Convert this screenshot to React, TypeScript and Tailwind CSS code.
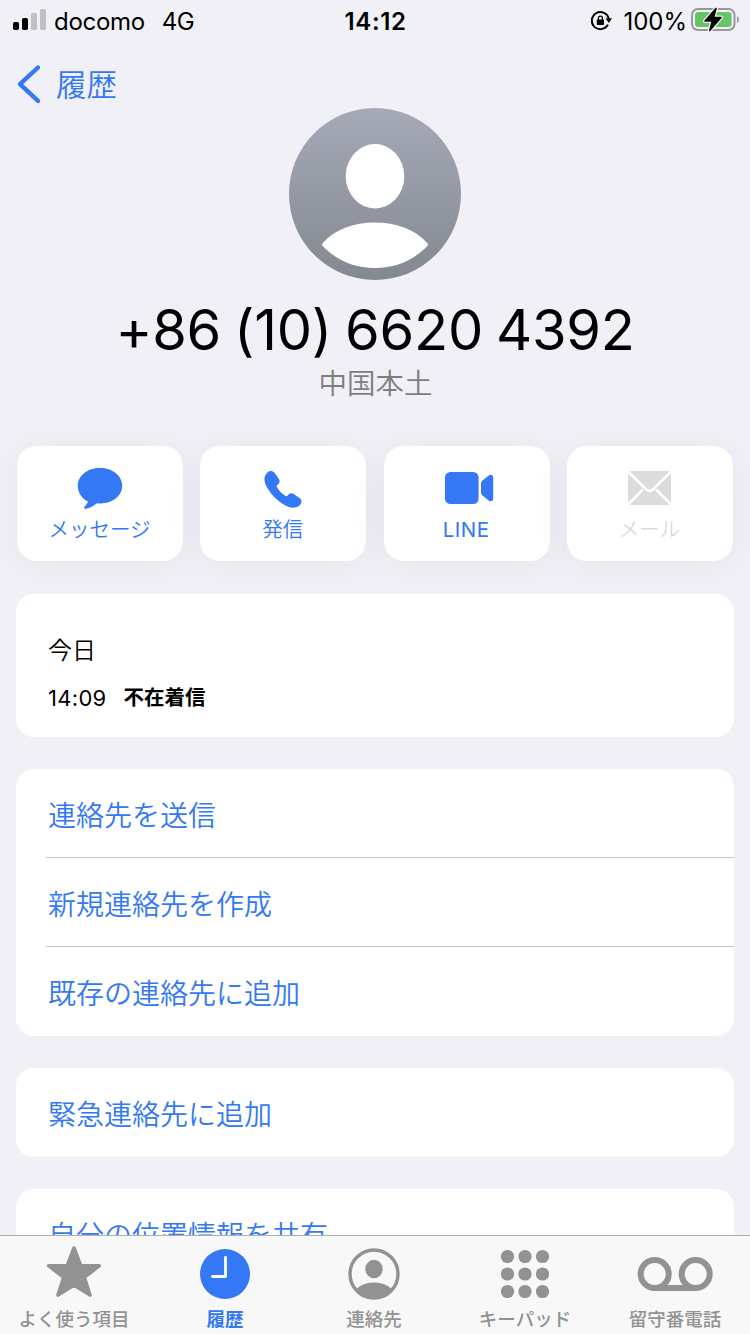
import type { ReactNode } from "react";

function SignalIcon() {
  return (
    <svg width="34" height="24" viewBox="13 8 34 24" className="mb-0.5 shrink-0">
      <rect x="13" y="22" width="6" height="8" rx="1.8" fill="#000" />
      <rect x="22" y="18" width="6" height="12" rx="1.8" fill="#000" />
      <rect x="31" y="13" width="6" height="17" rx="1.8" fill="#c0bfc5" />
      <rect x="40" y="9" width="6" height="21" rx="1.8" fill="#c0bfc5" />
    </svg>
  );
}

function RotationLockIcon() {
  return (
    <svg width="24" height="24" viewBox="590 8 24 24" className="mb-0.5 shrink-0">
      <path d="M608.600 25.300A8.600 8.600 0 1 1 609.600 18" fill="none" stroke="#000" strokeWidth="1.900" strokeLinecap="round" />
      <path d="M606.600 18.300h6.400l-3.200 4.800z" fill="#000" />
      <rect x="597.800" y="19.400" width="7.200" height="5.700" rx="0.800" fill="#000" />
      <path d="M599.400 20v-1.800a2 2 0 0 1 4 0V20" fill="none" stroke="#000" strokeWidth="1.300" />
    </svg>
  );
}

function BatteryIcon() {
  return (
    <svg width="50" height="26" viewBox="690 7 50 26" className="mb-0.5 shrink-0">
      <rect x="692" y="9" width="42.500" height="21" rx="6" fill="none" stroke="#98979d" strokeWidth="2" />
      <path d="M737 16.200c2.600 1 2.600 5.600 0 6.600z" fill="#98979d" />
      <rect x="695" y="12" width="36.500" height="15" rx="3.300" fill="#65c466" />
      <path d="M716 8.500L705 21.100h7.200l-2.500 9.500 11.300-13.200h-7.300z" fill="#000" stroke="#f1f0f6" strokeWidth="4" strokeLinejoin="round" />
      <path d="M716 8.500L705 21.100h7.200l-2.500 9.500 11.300-13.200h-7.300z" fill="#000" stroke="#000" strokeWidth="1.500" strokeLinejoin="round" />
    </svg>
  );
}

function Avatar() {
  return (
    <svg width="172" height="172" viewBox="0 0 172 172">
      <defs>
        <linearGradient id="avatar" x1="0" y1="0" x2="0" y2="1">
          <stop offset="0" stopColor="#a6aab8" />
          <stop offset="1" stopColor="#848890" />
        </linearGradient>
      </defs>
      <circle cx="86" cy="86" r="86" fill="url(#avatar)" />
      <ellipse cx="86" cy="68.200" rx="29.300" ry="32.200" fill="#fff" />
      <path d="M33.600 135.200C45 121.500 65 114.400 86 114.400s41 7.100 52.400 20.800q1.200 1.500 0 2.900C124 152.500 107 160 86 160s-38-7.500-52.400-21.900q-1.200-1.400 0-2.900z" fill="#fff" />
    </svg>
  );
}

function MessageIcon() {
  return (
    <svg width="50" height="50" viewBox="75 463 50 50">
      <path d="M100 468c12.700 0 22.200 7.800 22.200 17.800s-9.500 17.700-21.700 17.700c-1.200 0-2.300 0-3.400-.2-3.300 2.300-7.300 5-11.200 5.500-1.900.2-2.200-1.300-1.200-2.400 1.500-1.500 2.800-3 3.200-4.800-6.200-3.200-10.100-8.900-10.100-15.800 0-10 9.500-17.800 22.200-17.800z" fill="#3478f6" />
    </svg>
  );
}

function PhoneIcon() {
  return (
    <svg width="50" height="50" viewBox="258 463 50 50">
      <path d="M267 472.900c2.500-2.600 5.800-2.600 7.700.1l4.200 6.100c1.200 1.800.9 3.600-.6 5l-1 1c-.7.700-.7 1.300-.3 2.100 2 3.500 5.200 6.700 8.700 8.700.7.400 1.300.3 1.900-.3l1-1c1.600-1.600 3.400-1.800 5.200-.6l6 4.200c2.600 1.900 2.100 5.100-.4 7.300-4.600 3.600-10.300 2.500-15.800-.9-6.400-4-12-9.700-15.900-16.100-3.300-5.500-5-11.400-.7-15.600z" fill="#3478f6" />
    </svg>
  );
}

function VideoIcon() {
  return (
    <svg width="50" height="50" viewBox="442 463 50 50" className="overflow-visible">
      <rect x="445" y="472" width="33.600" height="32" rx="5.500" fill="#3478f6" />
      <path d="M481 483.400q0-1.500 1.200-2.600l6.500-5.200c2-1.600 4.500-.9 4.500 1.800v21.200c0 2.700-2.500 3.400-4.500 1.800l-6.500-5.200q-1.200-1.100-1.200-2.600z" fill="#3478f6" />
    </svg>
  );
}

function MailIcon() {
  return (
    <svg width="50" height="50" viewBox="625 463 50 50">
      <rect x="628" y="471" width="43" height="34" rx="2.500" fill="#dcdcdc" />
      <path d="M627 470.500l18.600 18.300q4 4 8 0L672 470.500M627 505.500l16-16M672 505.500l-16-16" fill="none" stroke="#fff" strokeWidth="2.500" />
    </svg>
  );
}

function StarIcon() {
  return (
    <svg width="60" height="56" viewBox="44 1244 60 56">
      <path d="M74 1248l6.700 17.700h18.600L84.300 1277.400l5.700 17.600L74 1285l-16 10 5.700-17.600-15-11.700h18.600z" fill="#929292" stroke="#929292" strokeWidth="3.600" strokeLinejoin="round" />
    </svg>
  );
}

function ClockIcon() {
  return (
    <svg width="60" height="56" viewBox="195 1244 60 56">
      <circle cx="225" cy="1274" r="25" fill="#3478f6" />
      <path d="M225.500 1257.500v19h-13" fill="none" stroke="#fff" strokeWidth="2.800" strokeLinecap="round" strokeLinejoin="round" />
    </svg>
  );
}

function ContactIcon() {
  return (
    <svg width="60" height="56" viewBox="344 1244 60 56">
      <defs>
        <clipPath id="contact">
          <circle cx="374" cy="1274" r="24.500" />
        </clipPath>
      </defs>
      <circle cx="374" cy="1274" r="24" fill="none" stroke="#929292" strokeWidth="3.400" />
      <ellipse cx="374" cy="1269" rx="8.700" ry="9.300" fill="#929292" />
      <ellipse cx="374" cy="1296" rx="20.500" ry="13.500" fill="#929292" clipPath="url(#contact)" />
    </svg>
  );
}

function KeypadIcon() {
  return (
    <svg width="60" height="56" viewBox="495 1244 60 56" fill="#929292">
      {[1256.5, 1274, 1291.5].map((y) =>
        [507.5, 525, 542.5].map((x) => <circle key={`${x}-${y}`} cx={x} cy={y} r="6.600" />),
      )}
    </svg>
  );
}

function VoicemailIcon() {
  return (
    <svg width="80" height="56" viewBox="635 1244 80 56" fill="none" stroke="#929292" strokeWidth="6">
      <circle cx="654.700" cy="1274" r="14" />
      <circle cx="695.700" cy="1274" r="14" />
      <path d="M654.700 1288h41" />
    </svg>
  );
}

function Action({ icon, label, color }: { icon: ReactNode; label: string; color: string }) {
  return (
    <button className="flex h-[115px] w-[166px] flex-col items-center rounded-[20px] bg-white pt-[17px] shadow-[0_4px_40px_rgba(0,0,0,0.05)]">
      {icon}
      <span className={`mt-0.5 mr-px h-[30px] text-[20.5px] leading-[30px] whitespace-nowrap ${color}`}>{label}</span>
    </button>
  );
}

function LinkRow({ label, divided = false }: { label: string; divided?: boolean }) {
  return (
    <div className="flex h-[89px] flex-col pl-[30px]">
      <div className={`flex flex-1 items-center pt-[5px] pl-0.5 text-[28px] text-[#3478f6] ${divided ? "border-b border-[#c6c6c8]" : ""}`}>
        {label}
      </div>
    </div>
  );
}

function Tab({ icon, label, active = false, align = "" }: { icon: ReactNode; label: string; active?: boolean; align?: string }) {
  return (
    <div className={`flex w-[150px] flex-col items-center pt-2 ${align}`}>
      {icon}
      <span className={`mt-[7px] h-6 text-[18.5px] leading-6 whitespace-nowrap ${active ? "font-bold text-[#3478f6]" : "font-medium text-[#929292]"}`}>
        {label}
      </span>
    </div>
  );
}

export default function App() {
  return (
    <div className="flex h-[1334px] w-[750px] flex-col overflow-hidden bg-[#f1f0f6] font-[Inter,'Noto_Sans_CJK_JP',sans-serif] font-[350] text-black [font-feature-settings:'calt'_0]">
      <header className="grid h-10 shrink-0 grid-cols-[1fr_auto_1fr] items-center pl-[13px] text-[24px] leading-10 font-normal">
        <div className="flex items-center">
          <SignalIcon />
          <span className="mt-0.5 ml-[7px] tracking-[-0.3px]">docomo</span>
          <span className="mt-0.5 ml-[17px] tracking-[-0.5px]">4G</span>
        </div>
        <span className="mt-0.5 -ml-[12px] font-semibold tracking-[0.6px]">14:12</span>
        <div className="flex items-center justify-end pr-[10px]">
          <RotationLockIcon />
          <span className="mt-0.5 mr-[3px] ml-[10px]">100%</span>
          <BatteryIcon />
        </div>
      </header>
      <main className="flex min-h-0 flex-1 flex-col overflow-hidden">
        <nav className="flex h-[68px] shrink-0 items-center pt-5 pl-4 text-[30.5px] text-[#3478f6]">
          <svg width="26" height="42" viewBox="16 63 26 42">
            <path d="M38 67.500L20 84.200l18 16.700" fill="none" stroke="#3478f6" strokeWidth="4.400" strokeLinecap="round" strokeLinejoin="round" />
          </svg>
          <span className="mt-0.5 ml-[14px] leading-10">履歴</span>
        </nav>
        <section className="flex shrink-0 flex-col items-center">
          <Avatar />
          <h1 className="mt-[18px] h-16 text-[56px] leading-16 font-normal tracking-[-0.25px] whitespace-nowrap [word-spacing:-2.500px]">+86 (10) 6620 4392</h1>
          <p className="mt-0.5 ml-px h-10 text-[28.500px] leading-10 text-[#7e7e80]">中国本土</p>
        </section>
        <section className="mt-[42px] flex shrink-0 justify-between px-[17px]">
          <Action icon={<MessageIcon />} label="メッセージ" color="text-[#3478f6]" />
          <Action icon={<PhoneIcon />} label="発信" color="text-[#3478f6]" />
          <Action icon={<VideoIcon />} label="LINE" color="font-normal tracking-[0.5px] text-[#3478f6]" />
          <Action icon={<MailIcon />} label="メール" color="text-[#dcdcdc]" />
        </section>
        <section className="mx-4 mt-[33px] h-[143px] shrink-0 rounded-[18px] bg-white pt-[41px] pl-8">
          <h2 className="h-8 text-[24px] leading-8">今日</h2>
          <p className="mt-[15px] flex h-8 items-center text-[22px] leading-8">
            <span className="font-normal tracking-[0.3px]">14:09</span>
            <span className="ml-[17px] text-[20.500px] font-bold">不在着信</span>
          </p>
        </section>
        <section className="mx-4 mt-8 shrink-0 rounded-[18px] bg-white">
          <LinkRow label="連絡先を送信" divided />
          <LinkRow label="新規連絡先を作成" divided />
          <LinkRow label="既存の連絡先に追加" />
        </section>
        <section className="mx-4 mt-8 shrink-0 rounded-[18px] bg-white">
          <LinkRow label="緊急連絡先に追加" />
        </section>
        <section className="mx-4 mt-8 shrink-0 rounded-[18px] bg-white">
          <LinkRow label="自分の位置情報を共有" />
        </section>
      </main>
      <footer className="flex h-[99px] shrink-0 border-t border-[#aeaeb1] bg-[#f8f8f9]">
        <Tab icon={<StarIcon />} label="よく使う項目" align="pr-0.5" />
        <Tab icon={<ClockIcon />} label="履歴" active />
        <Tab icon={<ContactIcon />} label="連絡先" align="pr-0.5" />
        <Tab icon={<KeypadIcon />} label="キーパッド" />
        <Tab icon={<VoicemailIcon />} label="留守番電話" />
      </footer>
    </div>
  );
}
